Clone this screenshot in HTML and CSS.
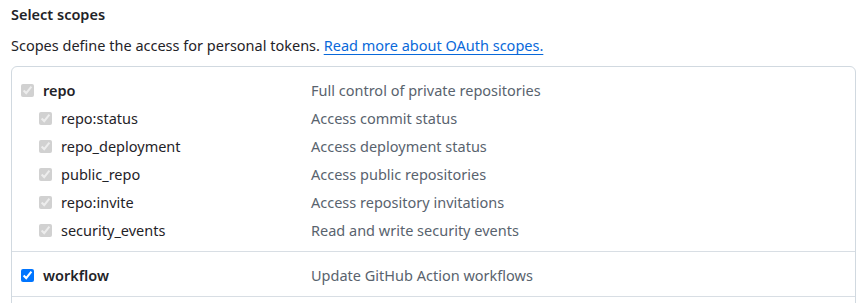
FILE: index.html
```html
<!DOCTYPE html>
<html>
  <head>
    <meta charset="utf-8">
    <title>Select scopes</title>
    <link rel="stylesheet" href="styles.css">
  </head>
  <body>
    <div class="scopes">
      <h3 class="scopes-title">Select scopes</h3>
      <p class="scopes-note">Scopes define the access for personal tokens. <a href="#">Read more about OAuth scopes.</a></p>

      <div class="scope-box">
        <ul class="scope-group">
          <li class="scope-row parent">
            <label class="scope-name"><input type="checkbox" checked disabled> repo</label>
            <span class="scope-desc">Full control of private repositories</span>
          </li>
          <li class="scope-row child">
            <label class="scope-name"><input type="checkbox" checked disabled> repo:status</label>
            <span class="scope-desc">Access commit status</span>
          </li>
          <li class="scope-row child">
            <label class="scope-name"><input type="checkbox" checked disabled> repo_deployment</label>
            <span class="scope-desc">Access deployment status</span>
          </li>
          <li class="scope-row child">
            <label class="scope-name"><input type="checkbox" checked disabled> public_repo</label>
            <span class="scope-desc">Access public repositories</span>
          </li>
          <li class="scope-row child">
            <label class="scope-name"><input type="checkbox" checked disabled> repo:invite</label>
            <span class="scope-desc">Access repository invitations</span>
          </li>
          <li class="scope-row child">
            <label class="scope-name"><input type="checkbox" checked disabled> security_events</label>
            <span class="scope-desc">Read and write security events</span>
          </li>
        </ul>

        <ul class="scope-group">
          <li class="scope-row parent">
            <label class="scope-name"><input type="checkbox" checked> workflow</label>
            <span class="scope-desc">Update GitHub Action workflows</span>
          </li>
        </ul>
      </div>
    </div>
  </body>
</html>
```

FILE: styles.css
```css
* {
  box-sizing: border-box;
}

body {
  margin: 0;
  font-family: "Noto Sans", "Open Sans", Arial, sans-serif;
  font-size: 14.5px;
  color: #1f2328;
  background: #fff;
}

.scopes {
  padding: 4px 12px 0 11px;
}

.scopes-title {
  margin: 0;
  font-size: 14.5px;
  line-height: 20px;
  font-weight: 600;
}

.scopes-note {
  margin: 11px 0 11px;
  line-height: 20px;
}

.scopes-note a {
  color: #0969da;
  text-decoration: underline;
  text-underline-offset: 3px;
}

.scope-box {
  border: 1px solid #d1d9e0;
  border-radius: 6px;
  padding-bottom: 40px;
}

.scope-group {
  list-style: none;
  margin: 0;
  padding: 9px 0 7px 9px;
  border-bottom: 1px solid #d8dee4;
}

.scope-row {
  display: grid;
  grid-template-columns: 290px 1fr;
  align-items: center;
  height: 28px;
}

.scope-name {
  display: flex;
  align-items: center;
  gap: 9px;
}

.scope-row.parent .scope-name {
  font-weight: 600;
}

.scope-row.child .scope-name {
  padding-left: 18px;
}

.scope-name input {
  margin: 0;
  width: 13px;
  height: 13px;
  accent-color: #0075ff;
}

.scope-desc {
  color: #59636e;
}
```
